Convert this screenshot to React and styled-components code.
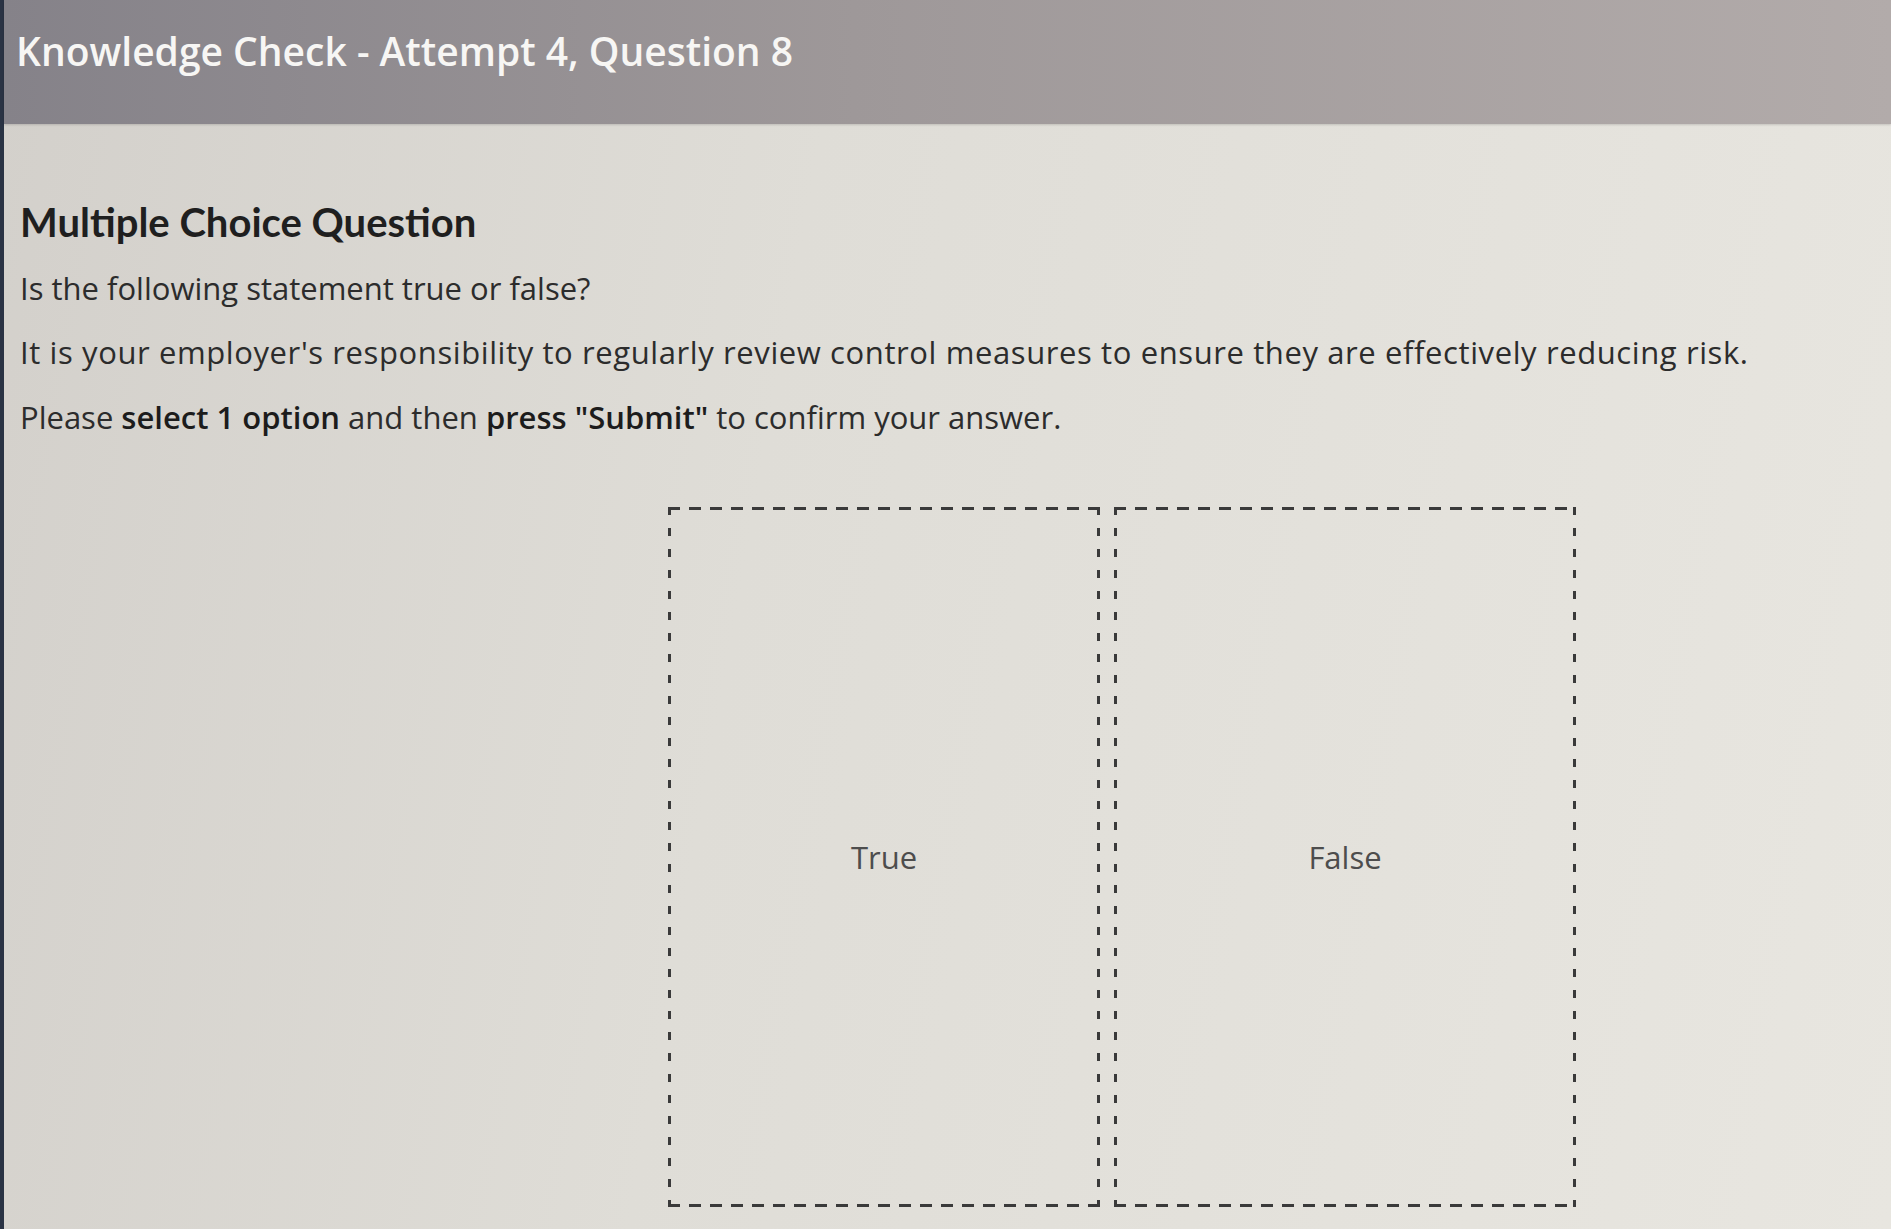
import React from 'react';
import styled, { createGlobalStyle } from 'styled-components';

const GlobalStyle = createGlobalStyle`
  html, body {
    margin: 0;
    padding: 0;
    height: 100%;
    overflow: hidden;
  }
  body {
    font-family: "Open Sans", "Noto Sans", sans-serif;
    background: #e1dfd9;
  }
`;

const Page = styled.div`
  box-sizing: border-box;
  width: 100%;
  height: 100vh;
  display: flex;
  flex-direction: column;
  background: linear-gradient(100deg, #d3d0cb 0%, #dfddd7 40%, #e8e6e0 100%);
  border-left: 4px solid #2a3344;
`;

const Header = styled.header`
  box-sizing: border-box;
  height: 124px;
  padding: 28px 0 0 12px;
  background: linear-gradient(90deg, #858289 0%, #9e9899 45%, #b2abaa 100%);
  box-shadow: 0 1px 2px rgba(0, 0, 0, 0.15);
`;

const HeaderTitle = styled.h1`
  margin: 0;
  color: #f7f6f4;
  font-size: 39px;
  font-weight: 600;
  line-height: 1.2;
`;

const Content = styled.main`
  display: flex;
  flex-direction: column;
  padding: 74px 0 0 16px;
`;

const Title = styled.h2`
  margin: 0 0 22px;
  font-family: Lato, "Open Sans", sans-serif;
  color: #1f1f1f;
  font-size: 40px;
  font-weight: 700;
  line-height: 1.2;
`;

const Text = styled.p`
  margin: 0 0 ${p => p.gap ?? 24}px;
  color: #2c2c2c;
  font-size: 31px;
  line-height: 1.3;
  letter-spacing: ${p => p.spread || 0}px;
  b {
    font-weight: 600;
    color: #1c1c1c;
  }
`;

const Options = styled.div`
  display: flex;
  gap: 14px;
  margin: 70px 0 0 648px;
`;

const dash = '#3a3a3a';

const Option = styled.button`
  box-sizing: border-box;
  width: ${p => p.w}px;
  height: 700px;
  display: flex;
  align-items: center;
  justify-content: center;
  padding: 0;
  border: none;
  background:
    repeating-linear-gradient(90deg, ${dash} 0 12px, transparent 12px 21px) left top / 100% 3px no-repeat,
    repeating-linear-gradient(90deg, ${dash} 0 12px, transparent 12px 21px) left bottom / 100% 3px no-repeat,
    repeating-linear-gradient(180deg, ${dash} 0 8px, transparent 8px 21px) left top / 3px 100% no-repeat,
    repeating-linear-gradient(180deg, ${dash} 0 8px, transparent 8px 21px) right top / 3px 100% no-repeat;
  font-family: inherit;
  font-size: 31px;
  font-weight: 400;
  color: #4d4d4d;
  cursor: pointer;
`;

export default function App() {
  return (
    <>
      <GlobalStyle />
      <Page>
        <Header>
          <HeaderTitle>Knowledge Check - Attempt 4, Question 8</HeaderTitle>
        </Header>
        <Content>
          <Title>Multiple Choice Question</Title>
          <Text>Is the following statement true or false?</Text>
          <Text spread={0.6}>
            It is your employer&apos;s responsibility to regularly review control measures to ensure they are effectively reducing risk.
          </Text>
          <Text gap={0}>
            Please <b>select 1 option</b> and then <b>press &quot;Submit&quot;</b> to confirm your answer.
          </Text>
          <Options>
            <Option w={432}>True</Option>
            <Option w={462}>False</Option>
          </Options>
        </Content>
      </Page>
    </>
  );
}
